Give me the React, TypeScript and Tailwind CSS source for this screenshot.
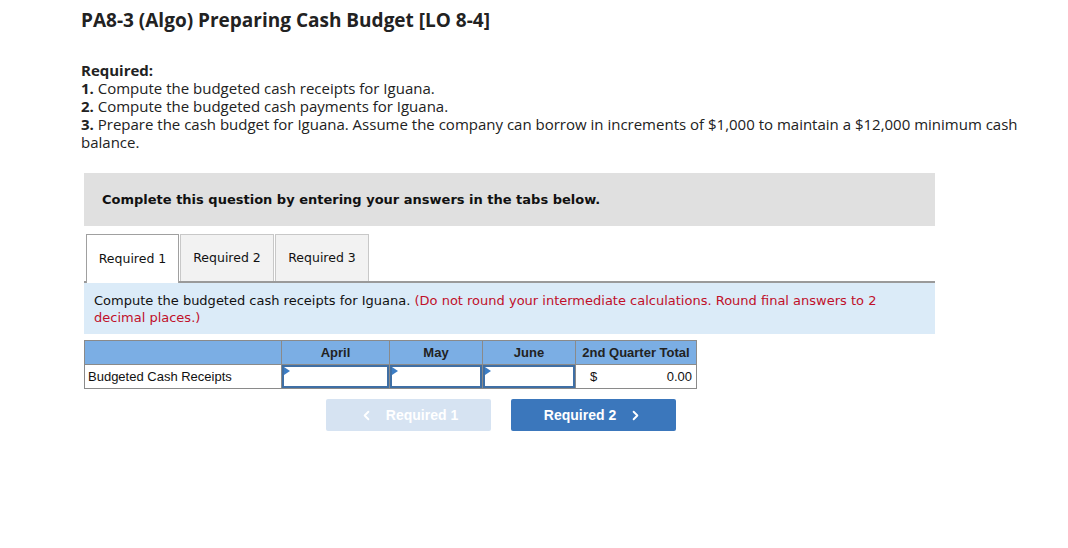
import { ChevronLeft, ChevronRight } from "lucide-react";

const months = ["April", "May", "June"];

function AnswerCell({ width }: { width: string }) {
    return (
        <td className={`${width} p-0 border border-[#8a8a8a]`}>
            <div className="relative h-[23px] border-2 border-[#3f6fa5] bg-white">
                <span className="absolute left-0 top-0 w-0 h-0 border-t-[4px] border-b-[4px] border-l-[6px] border-t-transparent border-b-transparent border-l-[#3c7dc4]" />
            </div>
        </td>
    );
}

export default function App() {
    return (
        <div className="w-[1068px] h-[548px] bg-white text-[#222] font-['Open_Sans',sans-serif]">
            <div className="pl-[81px] pr-[40px] pt-[9px]">
                <h1 className="text-[19px] font-bold leading-[22px] text-[#222]">
                    PA8-3 (Algo) Preparing Cash Budget [LO 8-4]
                </h1>

                <div className="mt-[30px] text-[15px] leading-[18px] text-[#222] max-w-[945px]">
                    <p className="font-bold">Required:</p>
                    <p><b>1.</b> Compute the budgeted cash receipts for Iguana.</p>
                    <p><b>2.</b> Compute the budgeted cash payments for Iguana.</p>
                    <p>
                        <b>3.</b> Prepare the cash budget for Iguana. Assume the company can borrow in increments of $1,000 to maintain a $12,000 minimum cash balance.
                    </p>
                </div>
            </div>

            <div className="ml-[84px] w-[851px] mt-[22px] font-['DejaVu_Sans',sans-serif]">
                <div className="h-[53px] bg-[#e0e0e0] flex items-center px-[18px] text-[13px] font-bold text-[#111]">
                    Complete this question by entering your answers in the tabs below.
                </div>

                <div className="mt-[8px] flex items-end border-b-2 border-[#9a9a9a] pl-[2px] gap-[1px]">
                    <div className="w-[93px] h-[49px] -mb-[2px] bg-white border border-[#a0a0a0] border-b-0 flex items-center justify-center text-[12.5px] text-[#111]">
                        Required 1
                    </div>
                    <div className="w-[94px] h-[47px] bg-[#f2f2f2] border border-[#c8c8c8] border-b-0 flex items-center justify-center text-[12.5px] text-[#111]">
                        Required 2
                    </div>
                    <div className="w-[94px] h-[47px] bg-[#f2f2f2] border border-[#c8c8c8] border-b-0 flex items-center justify-center text-[12.5px] text-[#111]">
                        Required 3
                    </div>
                </div>

                <div className="bg-[#dbebf8] h-[51px] px-[10px] pt-[9px] text-[13px] leading-[17px] text-[#111]">
                    Compute the budgeted cash receipts for Iguana.{" "}
                    <span className="text-[#c0102a]">
                        (Do not round your intermediate calculations. Round final answers to 2 decimal places.)
                    </span>
                </div>

                <table className="mt-[6px] border-collapse font-['Liberation_Sans',Arial,sans-serif] text-[13px]">
                    <thead>
                        <tr className="h-[24px] bg-[#7baee4]">
                            <th className="w-[197px] border border-[#8a8a8a]" />
                            {months.map((m, i) => (
                                <th
                                    key={m}
                                    className={`${i === 0 ? "w-[108px]" : "w-[93px]"} border border-[#8a8a8a] font-bold text-[#222] text-center`}
                                >
                                    {m}
                                </th>
                            ))}
                            <th className="w-[121px] border border-[#8a8a8a] font-bold text-[#222] text-center">
                                2nd Quarter Total
                            </th>
                        </tr>
                    </thead>
                    <tbody>
                        <tr className="h-[24px]">
                            <td className="border border-[#8a8a8a] px-[3px] text-[#111]">Budgeted Cash Receipts</td>
                            <AnswerCell width="w-[108px]" />
                            <AnswerCell width="w-[93px]" />
                            <AnswerCell width="w-[93px]" />
                            <td className="border border-[#8a8a8a] px-[4px] text-[#111]">
                                <div className="flex justify-between pl-[10px]">
                                    <span>$</span>
                                    <span>0.00</span>
                                </div>
                            </td>
                        </tr>
                    </tbody>
                </table>

                <div className="mt-[10px] ml-[242px] flex gap-[20px] font-['Liberation_Sans',Arial,sans-serif] text-[14px] font-bold">
                    <button className="w-[165px] h-[32px] rounded-[2px] bg-[#d6e3f2] text-white flex items-center justify-center gap-[12px]">
                        <ChevronLeft size={15} strokeWidth={3} />
                        Required 1
                    </button>
                    <button className="w-[165px] h-[32px] rounded-[2px] bg-[#3b77bc] text-white flex items-center justify-center gap-[12px]">
                        Required 2
                        <ChevronRight size={15} strokeWidth={3} />
                    </button>
                </div>
            </div>
        </div>
    );
}
